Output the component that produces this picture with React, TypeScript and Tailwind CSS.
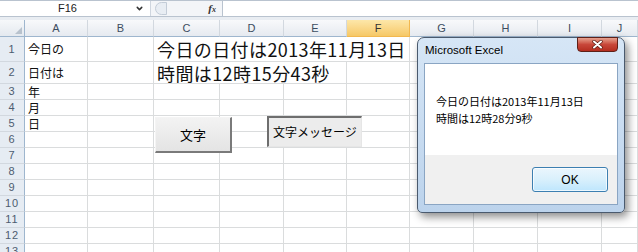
import { ChevronDown } from 'lucide-react';

/**
 * Excel 2010 sheet with a MsgBox on top — date/time demo.
 */
type Cell = { text?: string; span?: 1 | 3 | 4; big?: boolean };

const COLS = ['A', 'B', 'C', 'D', 'E', 'F', 'G', 'H', 'I', 'J'];

const SPAN: Record<number, string> = { 1: '', 3: 'col-span-3', 4: 'col-span-4' };

const empty = (n: number): Cell[] => Array.from({ length: n }, () => ({}));

const ROWS: Cell[][] = [
  [{ text: '今日の' }, {}, { text: '今日の日付は2013年11月13日', span: 4, big: true }, ...empty(4)],
  [{ text: '日付は' }, {}, { text: '時間は12時15分43秒', span: 3, big: true }, ...empty(5)],
  [{ text: '年' }, ...empty(9)],
  [{ text: '月' }, ...empty(9)],
  [{ text: '日' }, ...empty(9)],
  ...Array.from({ length: 8 }, () => empty(10)),
];

function FormulaBar() {
  return (
    <div className="flex h-[17px] border-t border-b border-[#b9c3cf] bg-white">
      <div className="relative flex w-[150px] items-center">
        <span className="w-[135px] text-center text-[11px] text-[#222] font-['Liberation_Sans',sans-serif]">F16</span>
        <ChevronDown className="h-[9px] w-[9px] text-[#333]" strokeWidth={4} />
      </div>
      <div className="flex w-[72px] items-center border-l border-[#cfd6df] bg-[#f3f5f8]">
        <div className="ml-[4px] h-[13px] w-[12px] rounded-l-full border border-[#c3ccd7] bg-[#e8edf3]" />
        <span className="ml-auto mr-[6px] text-[11px] font-bold italic text-[#333] font-['Liberation_Serif',serif]">
          f<span className="text-[8px]">x</span>
        </span>
      </div>
      <div className="flex-1 border-l border-[#b9c3cf] bg-white" />
    </div>
  );
}

function Sheet() {
  return (
    <div className="relative">
      <div className="grid grid-cols-[25px_63px_66px_66px_64px_63px_63px_64px_64px_64px_36px] grid-rows-[17px_25px_22px_repeat(11,16px)] font-['Noto_Sans_CJK_JP',sans-serif]">
        <div className="relative border-r border-b border-[#9eb6ce] bg-gradient-to-b from-[#f6f8fa] to-[#e4e9ef]">
          <svg className="absolute right-[2px] bottom-[2px]" width="7" height="7" viewBox="0 0 7 7">
            <polygon points="7,0 7,7 0,7" fill="#b8c2cd" />
          </svg>
        </div>
        {COLS.map((c) => (
          <div
            key={c}
            className={
              c === 'F'
                ? 'flex items-center justify-center border-r border-b border-[#f2b84f] bg-gradient-to-b from-[#fde7a9] to-[#f6c866] text-[11px] text-[#333] font-[\'Liberation_Sans\',sans-serif]'
                : 'flex items-center justify-center border-r border-b border-r-[#d2d8df] border-b-[#9eb6ce] bg-gradient-to-b from-[#f8f9fb] to-[#e6eaf0] text-[11px] text-[#3c4c60] font-[\'Liberation_Sans\',sans-serif]'
            }
          >
            {c}
          </div>
        ))}
        {ROWS.map((row, i) => (
          <div key={i} className="contents">
            <div className="flex items-center justify-center border-r border-b border-r-[#9eb6ce] border-b-[#d2d8df] bg-[#e6ecf3] text-[11px] tracking-[1px] text-[#4d5c70] font-['Liberation_Sans',sans-serif]">
              {i + 1}
            </div>
            {row.map((cell, j) => (
              <div
                key={j}
                className={`${SPAN[cell.span ?? 1]} flex items-center whitespace-nowrap border-r border-b border-[#dadcdd] px-[3px] text-[#111] ${
                  cell.big ? 'text-[18px] leading-none tracking-[0.4px]' : 'text-[12px] leading-none'
                }`}
              >
                {cell.text}
              </div>
            ))}
          </div>
        ))}
      </div>

      <button className="absolute left-[155px] top-[97px] flex h-[36px] w-[77px] items-center justify-center border-t border-l border-r-2 border-b-2 border-t-[#f4f4f4] border-l-[#f4f4f4] border-r-[#7a7a7a] border-b-[#7a7a7a] bg-gradient-to-b from-[#f3f3f3] to-[#e4e4e4] text-[13px] text-black font-['Noto_Sans_CJK_JP',sans-serif]">
        文字
      </button>
      <button className="absolute left-[267px] top-[96px] flex h-[31px] w-[95px] items-center justify-center border-t-2 border-l-2 border-r border-b border-t-[#6e6e6e] border-l-[#6e6e6e] border-r-[#e6e6e6] border-b-[#e6e6e6] bg-[#ececec] text-[12px] text-black font-['Noto_Sans_CJK_JP',sans-serif]">
        文字メッセージ
      </button>
    </div>
  );
}

function MsgBox() {
  return (
    <div className="absolute left-[417px] top-[37px] flex h-[176px] w-[208px] flex-col rounded-t-[7px] rounded-b-[5px] border border-[#4a5a6e] bg-gradient-to-b from-[#d6e6f6] to-[#bcd3ec] shadow-[3px_4px_8px_rgba(0,0,0,0.45)]">
      <div className="flex h-[25px] items-center pl-[7px] text-[11.5px] text-black font-['Liberation_Sans',sans-serif]">
        Microsoft Excel
      </div>
      <div className="absolute left-[159px] top-[-1px] flex h-[15px] w-[41px] items-center justify-center rounded-b-[4px] border border-[#5e2018] bg-gradient-to-b from-[#e5a08e] via-[#c8473a] to-[#b42d1f]">
        <svg width="11" height="9" viewBox="0 0 11 9">
          <path d="M2 1.5 L9 7.5 M9 1.5 L2 7.5" stroke="#5a1a12" strokeWidth="3.4" strokeLinecap="round" />
          <path d="M2 1.5 L9 7.5 M9 1.5 L2 7.5" stroke="#ffffff" strokeWidth="2" strokeLinecap="round" />
        </svg>
      </div>
      <div className="mx-[6px] mb-[7px] flex flex-1 flex-col border border-[#8aa5c3]">
        <div className="h-[91px] bg-white pl-[11px] pt-[29px] text-[11px] leading-[17px] text-black font-['Noto_Sans_CJK_JP',sans-serif]">
          <p>今日の日付は2013年11月13日</p>
          <p>時間は12時28分9秒</p>
        </div>
        <div className="flex flex-1 items-start justify-end bg-[#f0f0f0] pt-[12px] pr-[9px]">
          <button className="flex h-[25px] w-[76px] items-center justify-center rounded-[3px] border border-[#3c7fb1] bg-gradient-to-b from-[#eaf6fd] via-[#d9f0fc] to-[#bee6fd] text-[12px] text-black shadow-[inset_0_0_0_1px_rgba(255,255,255,0.7)] font-['Liberation_Sans',sans-serif]">
            OK
          </button>
        </div>
      </div>
    </div>
  );
}

export default function App() {
  return (
    <div className="relative h-[252px] w-[638px] overflow-hidden bg-white">
      <FormulaBar />
      <div className="h-[3px] bg-[#e9edf2]" />
      <Sheet />
      <MsgBox />
    </div>
  );
}
